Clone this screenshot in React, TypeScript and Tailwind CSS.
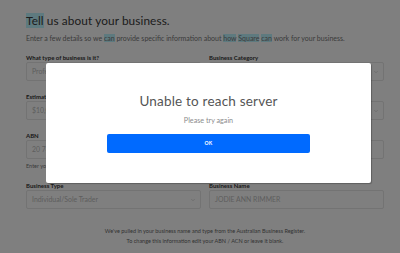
import { ChevronDown } from 'lucide-react';

interface FieldProps {
  label: string;
  value?: string;
  select?: boolean;
  helper?: string;
}

function Field({ label, value = '', select = false, helper }: FieldProps) {
  return (
    <div className="flex flex-col">
      <div className="h-[8px] text-[6px] leading-[8px] font-bold text-[#333]">{label}</div>
      <div className="relative flex items-center h-[19px] border border-[#e6e6e6] rounded-[2px] pl-[5px] text-[6.9px] text-[#bdbdbd]">
        {value}
        {select && (
          <ChevronDown className="absolute right-[4px] w-[6px] h-[6px] text-[#bbb]" strokeWidth={2} />
        )}
      </div>
      {helper && (
        <div className="mt-[3px] h-[8px] text-[5.5px] leading-[8px] text-[#777]">{helper}</div>
      )}
    </div>
  );
}

function Hl({ children }: { children: React.ReactNode }) {
  return <span className="bg-[#bdf4ff]">{children}</span>;
}

export default function App() {
  return (
    <div className="relative w-[400px] h-[253px] overflow-hidden bg-white font-['Lato',sans-serif]">
      <div className="pl-[26px] pt-[13px] w-[384px]">
        <h1 className="text-[11.8px] leading-[16px] text-[#3a3a3a] tracking-[0.1px]">
          <Hl>Tell</Hl> us about your business.
        </h1>
        <p className="mt-[5px] text-[7px] leading-[8px] text-[#777] whitespace-nowrap">
          Enter a few details so we <Hl>can</Hl> provide specific information about <Hl>how</Hl> <Hl>Square</Hl> <Hl>can</Hl> work for your business.
        </p>

        <div className="mt-[12px] grid grid-cols-[175px_175px] gap-x-[8px] gap-y-[12px]">
          <Field label="What type of business is it?" value="Professional Services" select />
          <Field label="Business Category" select />
          <Field label="Estimated annual revenue" value="$10,000 - $50,000" select />
          <Field label="Business Structure" select />
          <Field label="ABN" value="20 746 153 987" helper="Enter your ABN / ACN" />
          <Field label="ACN" />
          <Field label="Business Type" value="Individual/Sole Trader" select />
          <Field label="Business Name" value="JODIE ANN RIMMER" />
        </div>

        <div className="mt-[17px] w-[358px] text-center text-[5.5px] leading-[10px] text-[#666]">
          <div>We've pulled in your business name and type from the Australian Business Register.</div>
          <div>To change this information edit your ABN / ACN or leave it blank.</div>
        </div>
      </div>

      <div className="absolute inset-0 bg-black/50 flex justify-center pt-[63px] pl-[17px]">
        <div className="w-[325px] h-[120px] bg-white rounded-[2px] shadow-[1px_1px_1px_rgba(0,0,0,0.25)] flex flex-col items-center pt-[30px]">
          <div className="text-[13.5px] leading-[16px] text-[#555] tracking-[0.2px]">Unable to reach server</div>
          <div className="mt-[8px] text-[7.2px] leading-[8px] text-[#8c8c8c]">Please try again</div>
          <button
            type="button"
            className="mt-[9px] w-[203px] h-[19px] bg-[#006aff] rounded-[2px] text-white text-[5px] font-bold tracking-[0.3px]"
          >
            OK
          </button>
        </div>
      </div>
    </div>
  );
}
